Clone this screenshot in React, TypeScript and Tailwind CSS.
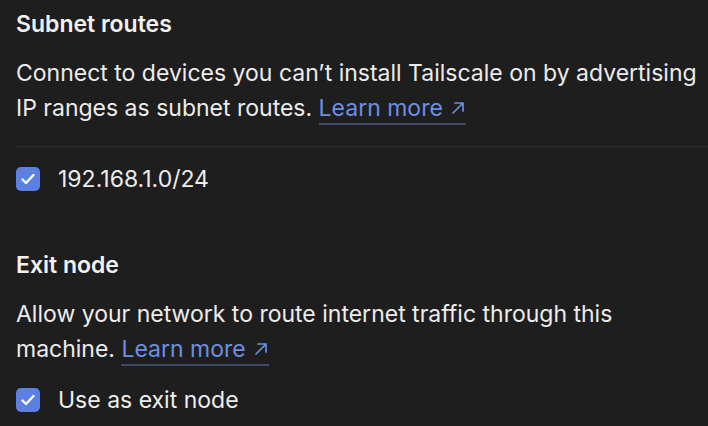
function ArrowUpRight() {
  return (
    <svg width="16" height="16" viewBox="0 0 16 16" fill="none" className="inline-block ml-[7px] -mt-[3px]">
      <path d="M3 13L13 3M5 3H13V11" stroke="currentColor" strokeWidth="1.7" strokeLinecap="round" strokeLinejoin="round" />
    </svg>
  );
}

function LearnMore() {
  return (
    <a href="#" className="text-[#6d8fe3] border-b-2 border-[#3d4a68] pb-[1px]">
      Learn more
      <ArrowUpRight />
    </a>
  );
}

function Check({ label }: { label: string }) {
  return (
    <label className="flex items-center gap-[18px] h-6">
      <span className="w-6 h-6 rounded-[5px] bg-[#5b80e1] flex items-center justify-center">
        <svg width="18" height="18" viewBox="0 0 18 18" fill="none">
          <path d="M3.5 9.5L7 13L14.5 5" stroke="white" strokeWidth="2.4" strokeLinecap="round" strokeLinejoin="round" />
        </svg>
      </span>
      <span className="text-[#ededed]">{label}</span>
    </label>
  );
}

export default function App() {
  return (
    <div
      className="w-[708px] h-[426px] overflow-hidden bg-[#1e1e1e] text-[#ececec] text-[23px] leading-[35px]"
      style={{ fontFamily: "Inter, 'Noto Sans', sans-serif" }}
    >
      <div className="pl-4 pt-[10px] w-[760px]">
        <section>
          <h2 className="text-[23px] leading-[28px] font-semibold text-[#f2f2f2]">Subnet routes</h2>
          <p className="mt-[18px] w-[684px]">
            Connect to devices you can’t install Tailscale on by advertising IP ranges as subnet routes. <LearnMore />
          </p>
          <div className="mt-5 border-t border-[#2e2e2e]" />
          <div className="mt-5">
            <Check label="192.168.1.0/24" />
          </div>
        </section>
        <section className="mt-[60px]">
          <h2 className="text-[23px] leading-[28px] font-semibold text-[#f2f2f2]">Exit node</h2>
          <p className="mt-[18px] w-[684px]">
            Allow your network to route internet traffic through this machine. <LearnMore />
          </p>
          <div className="mt-[21px]">
            <Check label="Use as exit node" />
          </div>
        </section>
      </div>
    </div>
  );
}
